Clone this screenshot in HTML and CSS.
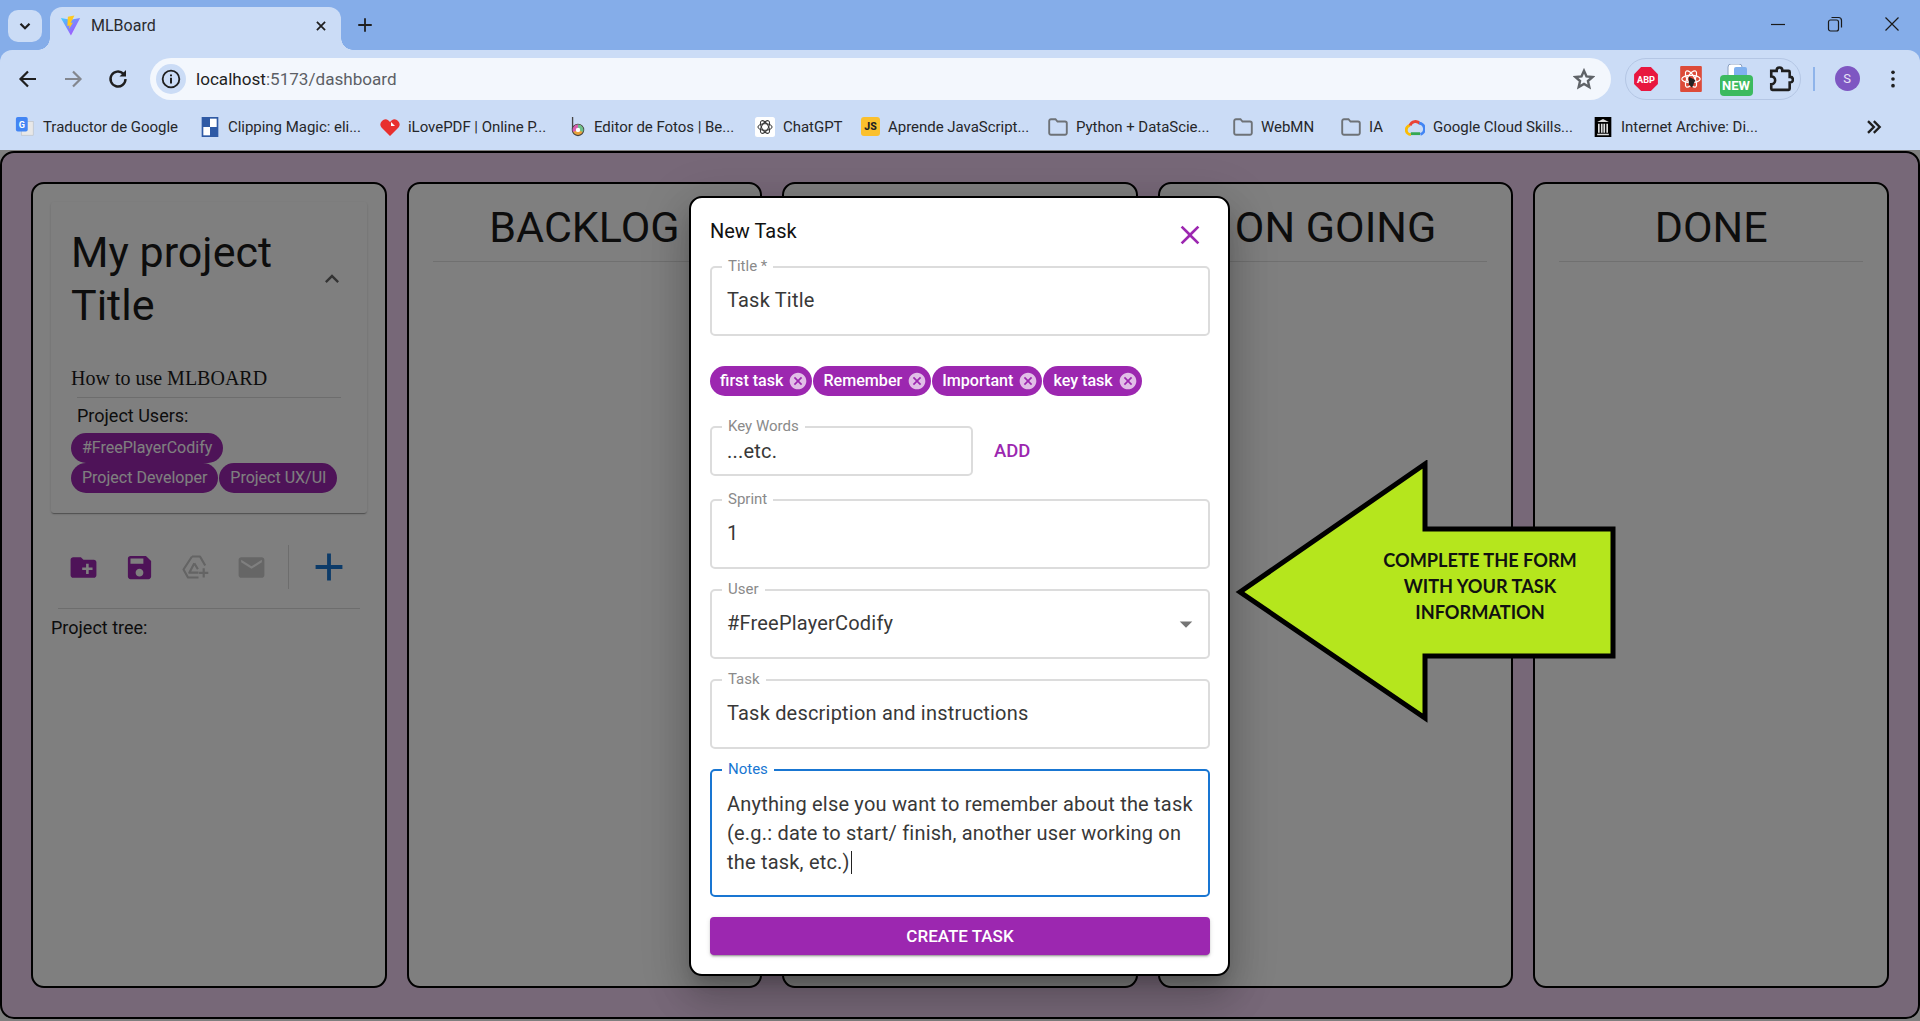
FILE: index.html
```html
<!DOCTYPE html>
<html lang="en">
<head>
<meta charset="utf-8">
<title>MLBoard</title>
<link rel="stylesheet" href="styles.css">
</head>
<body>
<header class="browser">
  <div class="tabstrip">
    <button class="tabsearch"><svg viewBox="0 0 24 24" class="i18"><path d="M6 9l6 6 6-6" fill="none" stroke="#1f1f1f" stroke-width="3"/></svg></button>
    <div class="tab">
      <svg viewBox="0 0 24 24" class="favicon"><defs><linearGradient id="vg" x1="0" y1="0" x2="1" y2="1"><stop offset="0" stop-color="#41d1ff"/><stop offset="1" stop-color="#bd34fe"/></linearGradient></defs><path d="M1 3.5L12 5.5 23 3.5 12.5 23.5z" fill="url(#vg)"/><path d="M16.5 0.5L9 2 8.4 12.5 11 12 10.3 16 14.8 8.6 12.2 9.1z" fill="#ffc91f"/></svg>
      <span class="tabtitle">MLBoard</span>
      <svg viewBox="0 0 24 24" class="tabclose"><path d="M5 5l14 14M19 5L5 19" stroke="#1f1f1f" stroke-width="3" fill="none"/></svg>
    </div>
    <svg viewBox="0 0 24 24" class="newtab"><path d="M12 3v18M3 12h18" stroke="#1f1f1f" stroke-width="2.4" fill="none"/></svg>
    <div class="wincontrols">
      <svg viewBox="0 0 20 20" class="win"><path d="M3 10.5h14" stroke="#1a1a1a" stroke-width="1.2"/></svg>
      <svg viewBox="0 0 20 20" class="win"><rect x="3.5" y="6" width="10" height="11" rx="2" fill="none" stroke="#1a1a1a" stroke-width="1.2"/><path d="M6.5 3.5h7a3 3 0 0 1 3 3v7" fill="none" stroke="#1a1a1a" stroke-width="1.2"/></svg>
      <svg viewBox="0 0 20 20" class="win"><path d="M3.5 3.5l13 13M16.5 3.5l-13 13" stroke="#1a1a1a" stroke-width="1.2"/></svg>
    </div>
  </div>
  <div class="toolbar">
    <button class="navbtn"><svg viewBox="0 0 24 24" class="i24"><path d="M20 12H5M12 4.5L4.5 12l7.5 7.5" fill="none" stroke="#1f1f1f" stroke-width="2.2"/></svg></button>
    <button class="navbtn"><svg viewBox="0 0 24 24" class="i24"><path d="M4 12h15M12 4.5l7.5 7.5-7.5 7.5" fill="none" stroke="#83878f" stroke-width="2.2"/></svg></button>
    <button class="navbtn"><svg viewBox="0 0 24 24" class="i24"><path d="M19.5 12a7.5 7.5 0 1 1-2.2-5.3" fill="none" stroke="#1f1f1f" stroke-width="2.4"/><path d="M20 3v6.5h-6.5z" fill="#1f1f1f"/></svg></button>
    <div class="address">
      <span class="siteinfo"><svg viewBox="0 0 24 24" class="i20"><circle cx="12" cy="12" r="10" fill="none" stroke="#1f1f1f" stroke-width="2.2"/><path d="M12 10.5v7M12 6.5v2.2" stroke="#1f1f1f" stroke-width="2.4"/></svg></span>
      <span class="url">localhost<span class="urlrest">:5173/dashboard</span></span>
      <svg viewBox="0 0 24 24" class="star"><path d="M12 3l2.7 6.1 6.6.7-5 4.4 1.5 6.5L12 17.3l-5.8 3.4 1.5-6.5-5-4.4 6.6-.7z" fill="none" stroke="#5f6368" stroke-width="2.6"/></svg>
    </div>
    <div class="extensions">
      <span class="ext"><svg viewBox="0 0 24 24" class="i26"><path d="M7.5 1h9L23 7.5v9L16.5 23h-9L1 16.5v-9z" fill="#e8173f"/><text x="12" y="15.8" class="abp">ABP</text></svg></span>
      <span class="ext"><svg viewBox="0 0 24 24" class="i26"><rect x="2" y="0" width="20" height="24" rx="1" fill="#dd4b39"/><g fill="none" stroke="#fff" stroke-width="1.1"><ellipse cx="12" cy="12" rx="8.5" ry="3.4"/><ellipse cx="12" cy="12" rx="8.5" ry="3.4" transform="rotate(60 12 12)"/><ellipse cx="12" cy="12" rx="8.5" ry="3.4" transform="rotate(120 12 12)"/></g><path d="M10 10l6 3-3 7-3-3z" fill="#222"/></svg></span>
      <span class="ext extnew"><svg viewBox="0 0 24 14" class="tabsicon"><rect x="3" y="0" width="14" height="14" rx="3" fill="#fff" stroke="#8aa0c0"/><rect x="9" y="3" width="13" height="11" rx="2" fill="#7fb0ee"/></svg><span class="newbadge">NEW</span></span>
      <span class="ext"><svg viewBox="0 0 24 24" class="i26"><path d="M3 4.5h5V4a2.6 2.6 0 0 1 5.2 0v.5H19a1 1 0 0 1 1 1V10h.4a2.6 2.6 0 0 1 0 5.2H20V21a1 1 0 0 1-1 1H4a1 1 0 0 1-1-1v-4.2a3.6 3.6 0 0 0 0-7.2z" fill="none" stroke="#1f1f1f" stroke-width="2.4"/></svg></span>
    </div>
    <span class="tooldivider"></span>
    <span class="avatar">S</span>
    <svg viewBox="0 0 6 24" class="kebab"><circle cx="3" cy="4" r="2.2"/><circle cx="3" cy="12" r="2.2"/><circle cx="3" cy="20" r="2.2"/></svg>
  </div>
  <nav class="bookmarks">
    <a class="bm"><svg viewBox="0 0 20 22" class="bmicon"><rect x="6" y="5" width="13" height="15" fill="#e8e8e8" stroke="#bbb" stroke-width=".6"/><rect x="0" y="0" width="13" height="16" rx="2" fill="#4285f4"/><text x="6.5" y="12" class="gl">G</text></svg>Traductor de Google</a>
    <a class="bm"><svg viewBox="0 0 20 24" class="bmicon"><rect width="20" height="24" fill="#2f5aa5"/><rect x="2" y="2" width="8" height="10" fill="#2f5aa5"/><rect x="10" y="2" width="8" height="10" fill="#fff"/><rect x="2" y="12" width="8" height="10" fill="#fff"/></svg>Clipping Magic: eli...</a>
    <a class="bm"><svg viewBox="0 0 20 20" class="bmicon"><path d="M10 19L1.5 10.5A5 5 0 0 1 8.5 3.5L10 5l1.5-1.5a5 5 0 0 1 7 7z" fill="#e8302e"/><path d="M11 5l4 4h-4z" fill="#fff"/></svg>iLovePDF | Online P...</a>
    <a class="bm"><svg viewBox="0 0 16 24" class="bmicon bmnarrow"><path d="M1.5 0v14" stroke="#444" stroke-width="1.6"/><circle cx="8" cy="15.5" r="6.8" fill="#e9a23b" stroke="#444" stroke-width="1.4"/><path d="M8 9a6.5 6.5 0 0 1 6 9L8 15.5z" fill="#6cc08b"/><path d="M2 18a6.5 6.5 0 0 1 6-9v6.5z" fill="#d65db1"/><circle cx="8" cy="15.5" r="2.6" fill="#fff"/></svg>Editor de Fotos | Be...</a>
    <a class="bm"><svg viewBox="0 0 24 24" class="bmicon"><rect width="24" height="24" rx="3" fill="#fff"/><g fill="none" stroke="#333" stroke-width="1.2"><ellipse cx="12" cy="12" rx="8.5" ry="4"/><ellipse cx="12" cy="12" rx="8.5" ry="4" transform="rotate(60 12 12)"/><ellipse cx="12" cy="12" rx="8.5" ry="4" transform="rotate(120 12 12)"/></g></svg>ChatGPT</a>
    <a class="bm"><span class="jsicon">JS</span>Aprende JavaScript...</a>
    <a class="bm"><svg viewBox="0 0 20 18" class="bmicon"><path d="M1.2 3a1.8 1.8 0 0 1 1.8-1.8h4.5l2 2.3H17a1.8 1.8 0 0 1 1.8 1.8V15a1.8 1.8 0 0 1-1.8 1.8H3A1.8 1.8 0 0 1 1.2 15z" fill="none" stroke="#6e7277" stroke-width="1.9"/></svg>Python + DataScie...</a>
    <a class="bm"><svg viewBox="0 0 20 18" class="bmicon"><path d="M1.2 3a1.8 1.8 0 0 1 1.8-1.8h4.5l2 2.3H17a1.8 1.8 0 0 1 1.8 1.8V15a1.8 1.8 0 0 1-1.8 1.8H3A1.8 1.8 0 0 1 1.2 15z" fill="none" stroke="#6e7277" stroke-width="1.9"/></svg>WebMN</a>
    <a class="bm"><svg viewBox="0 0 20 18" class="bmicon"><path d="M1.2 3a1.8 1.8 0 0 1 1.8-1.8h4.5l2 2.3H17a1.8 1.8 0 0 1 1.8 1.8V15a1.8 1.8 0 0 1-1.8 1.8H3A1.8 1.8 0 0 1 1.2 15z" fill="none" stroke="#6e7277" stroke-width="1.9"/></svg>IA</a>
    <a class="bm"><svg viewBox="0 0 24 20" class="bmicon"><path d="M7 19a5.5 5.5 0 0 1-1-10.9" fill="none" stroke="#fbbc04" stroke-width="3.4"/><path d="M6 8.1A7 7 0 0 1 18 6" fill="none" stroke="#ea4335" stroke-width="3.4"/><path d="M17 5.5a6.8 6.8 0 0 1 1.5 13.3" fill="none" stroke="#4285f4" stroke-width="3.4"/><path d="M7 18h11" stroke="#34a853" stroke-width="3.4"/></svg>Google Cloud Skills...</a>
    <a class="bm"><svg viewBox="0 0 20 24" class="bmicon"><rect width="20" height="24" fill="#000"/><path d="M3 6l7-3.5L17 6zM3 20h14v2H3z" fill="#ddd"/><path d="M5 8v11M8.5 8v11M11.5 8v11M15 8v11" stroke="#ddd" stroke-width="2"/></svg>Internet Archive: Di...</a>
    <a class="bm bmmore"><svg viewBox="0 0 24 24" class="i20"><path d="M6 5l7 7-7 7M13 5l7 7-7 7" fill="none" stroke="#1f1f1f" stroke-width="2.8"/></svg></a>
  </nav>
</header>

<main class="app">
  <div class="board">
    <section class="column project">
      <article class="card">
        <div class="cardhead">
          <h2 class="projecttitle">My project Title</h2>
          <svg viewBox="0 0 24 24" class="chevron"><path d="M12 8l-6 6 1.41 1.41L12 10.83l4.59 4.58L18 14z"/></svg>
        </div>
        <p class="howto">How to use MLBOARD</p>
        <hr class="cardrule">
        <p class="userslabel">Project Users:</p>
        <div class="userchips">
          <span class="chip">#FreePlayerCodify</span>
          <span class="chip">Project Developer</span>
          <span class="chip">Project UX/UI</span>
        </div>
      </article>
      <div class="actions">
        <span class="action"><svg viewBox="0 0 24 24" class="i31 purple"><path d="M20 6h-8l-2-2H4c-1.11 0-1.99.89-1.99 2L2 18c0 1.11.89 2 2 2h16c1.11 0 2-.89 2-2V8c0-1.11-.89-2-2-2zm-1 8h-3v3h-2v-3h-3v-2h3V9h2v3h3v2z"/></svg></span>
        <span class="action"><svg viewBox="0 0 24 24" class="i31 purple"><path d="M17 3H5c-1.11 0-2 .9-2 2v14c0 1.1.89 2 2 2h14c1.1 0 2-.9 2-2V7l-4-4zm-5 16c-1.66 0-3-1.34-3-3s1.34-3 3-3 3 1.34 3 3-1.34 3-3 3zm3-10H5V5h10v4z"/></svg></span>
        <span class="action"><svg viewBox="0 0 27 24" class="drive"><path d="M10 1.5h8l5.2 9M10 1.5L1.5 14.5 6 22.5h10.5M12.3 8.3L7.3 17.7H16.5M12.3 8.3l3.6 5.9" fill="none" stroke="#c8c8c8" stroke-width="2.2" stroke-linejoin="round"/><path d="M21.7 13.2v9.2M17.1 17.8h9.2" stroke="#c8c8c8" stroke-width="2.2"/></svg></span>
        <span class="action"><svg viewBox="0 0 24 24" class="i31 mail"><path d="M20 4H4c-1.1 0-1.99.9-1.99 2L2 18c0 1.1.9 2 2 2h16c1.1 0 2-.9 2-2V6c0-1.1-.9-2-2-2zm0 4l-8 5-8-5V6l8 5 8-5v2z"/></svg></span>
        <span class="actiondivider"></span>
        <span class="action"><svg viewBox="0 0 24 24" class="i44 blue"><path d="M19 13h-6v6h-2v-6H5v-2h6V5h2v6h6v2z"/></svg></span>
      </div>
      <hr class="treerule">
      <p class="treelabel">Project tree:</p>
    </section>
    <section class="column"><h2 class="coltitle">BACKLOG</h2><hr class="colrule"></section>
    <section class="column"><h2 class="coltitle">TO DO</h2><hr class="colrule"></section>
    <section class="column"><h2 class="coltitle">ON GOING</h2><hr class="colrule"></section>
    <section class="column"><h2 class="coltitle">DONE</h2><hr class="colrule"></section>
  </div>

  <div class="backdrop"></div>

  <div class="modal">
    <div class="modalhead">
      <h3 class="modaltitle">New Task</h3>
      <svg viewBox="0 0 24 24" class="modalclose"><path d="M19 6.41L17.59 5 12 10.59 6.41 5 5 6.41 10.59 12 5 17.59 6.41 19 12 13.41 17.59 19 19 17.59 13.41 12z"/></svg>
    </div>
    <div class="field"><span class="label">Title *</span><span class="value">Task Title</span></div>
    <div class="taskchips">
      <span class="taskchip">first task<svg viewBox="0 0 24 24" class="chipx"><path d="M12 2C6.47 2 2 6.47 2 12s4.47 10 10 10 10-4.47 10-10S17.53 2 12 2zm5 13.59L15.59 17 12 13.41 8.41 17 7 15.59 10.59 12 7 8.41 8.41 7 12 10.59 15.59 7 17 8.41 13.41 12 17 15.59z"/></svg></span>
      <span class="taskchip">Remember<svg viewBox="0 0 24 24" class="chipx"><path d="M12 2C6.47 2 2 6.47 2 12s4.47 10 10 10 10-4.47 10-10S17.53 2 12 2zm5 13.59L15.59 17 12 13.41 8.41 17 7 15.59 10.59 12 7 8.41 8.41 7 12 10.59 15.59 7 17 8.41 13.41 12 17 15.59z"/></svg></span>
      <span class="taskchip">Important<svg viewBox="0 0 24 24" class="chipx"><path d="M12 2C6.47 2 2 6.47 2 12s4.47 10 10 10 10-4.47 10-10S17.53 2 12 2zm5 13.59L15.59 17 12 13.41 8.41 17 7 15.59 10.59 12 7 8.41 8.41 7 12 10.59 15.59 7 17 8.41 13.41 12 17 15.59z"/></svg></span>
      <span class="taskchip">key task<svg viewBox="0 0 24 24" class="chipx"><path d="M12 2C6.47 2 2 6.47 2 12s4.47 10 10 10 10-4.47 10-10S17.53 2 12 2zm5 13.59L15.59 17 12 13.41 8.41 17 7 15.59 10.59 12 7 8.41 8.41 7 12 10.59 15.59 7 17 8.41 13.41 12 17 15.59z"/></svg></span>
    </div>
    <div class="keyrow">
      <div class="field keyfield"><span class="label">Key Words</span><span class="value">...etc.</span></div>
      <span class="addbtn">ADD</span>
    </div>
    <div class="field sprint"><span class="label">Sprint</span><span class="value">1</span></div>
    <div class="field gap20 selectfield"><span class="label">User</span><span class="value">#FreePlayerCodify</span><svg viewBox="0 0 24 24" class="dropdown"><path d="M7 10l5 5 5-5z"/></svg></div>
    <div class="field gap20"><span class="label">Task</span><span class="value">Task description and instructions</span></div>
    <div class="field gap20 notes"><span class="label notelabel">Notes</span><span class="value notesvalue">Anything else you want to remember about the task<br>(e.g.: date to start/ finish, another user working on<br>the task, etc.)<span class="caret"></span></span></div>
    <button class="createbtn">CREATE TASK</button>
  </div>

  <aside class="callout">
    <svg viewBox="0 0 384 264" class="calloutshape"><path d="M5 132L190 4V69H378V196H190V258z" fill="#b5e61d" stroke="#000" stroke-width="5" stroke-linejoin="miter"/></svg>
    <p class="callouttext">COMPLETE THE FORM<br>WITH YOUR TASK<br>INFORMATION</p>
  </aside>
</main>
</body>
</html>
```

FILE: styles.css
```css
* { box-sizing: border-box; }
html, body { margin: 0; height: 1021px; overflow: hidden; }
body { display: flex; flex-direction: column; background: #fff; font-family: Roboto, "Liberation Sans", sans-serif; color: #1a1a1a; }
h2, h3, p { margin: 0; font-weight: 400; }
button { border: 0; padding: 0; background: none; font-family: inherit; }
hr { border: 0; margin: 0; height: 1px; background: rgba(0,0,0,.12); }

.i18 { width: 18px; height: 18px; }
.i20 { width: 20px; height: 20px; }
.i24 { width: 24px; height: 24px; }
.i26 { width: 26px; height: 26px; }
.i31 { width: 31px; height: 31px; }
.i44 { width: 46px; height: 46px; }
.drive { width: 27px; height: 24px; }
.purple { fill: #9c27b0; }
.blue { fill: #1976d2; }
.mail { fill: #cdcdcd; }

/* Browser frame */
.browser { flex: none; height: 150px; display: flex; flex-direction: column; background: #85ade9; font-family: Roboto, sans-serif; }
.tabstrip { height: 50px; display: flex; align-items: flex-end; padding-left: 8px; flex: none; }
.tabsearch { width: 34px; height: 32px; margin-bottom: 8px; border-radius: 10px; background: #cbdcf6; display: flex; align-items: center; justify-content: center; }
.tab { position: relative; width: 291px; height: 43px; margin-left: 8px; background: #cbdcf6; border-radius: 12px 12px 0 0; display: flex; align-items: center; padding: 0 13px 6px 10px; }
.tab::before, .tab::after { content: ""; position: absolute; bottom: 0; width: 12px; height: 12px; }
.tab::before { left: -12px; background: radial-gradient(circle at 0 0, transparent 11.5px, #cbdcf6 12px); }
.tab::after { right: -12px; background: radial-gradient(circle at 100% 0, transparent 11.5px, #cbdcf6 12px); }
.favicon { width: 21px; height: 21px; flex: none; }
.tabtitle { margin-left: 10px; flex: 1; font-size: 16px; color: #2a2b2e; }
.tabclose { width: 14px; height: 14px; }
.newtab { width: 18px; height: 18px; margin: 0 0 16px 15px; }
.wincontrols { margin-left: auto; display: flex; align-items: center; margin-bottom: 16px; padding-right: 18px; gap: 37px; }
.win { width: 20px; height: 20px; }

.toolbar { height: 58px; flex: none; display: flex; align-items: flex-start; padding: 8px 0 0 5px; background: #cbdcf6; border-radius: 12px 12px 0 0; }
.navbtn { width: 45px; height: 42px; display: flex; align-items: center; justify-content: center; }
.address { width: 1461px; margin-left: 10px; height: 42px; border-radius: 21px; background: #f3f7fd; display: flex; align-items: center; padding: 0 16px 0 6px; }
.siteinfo { width: 30px; height: 30px; border-radius: 50%; background: #cbdcf6; display: flex; align-items: center; justify-content: center; }
.url { margin-left: 10px; font-size: 17.1px; color: #1f1f1f; flex: 1; }
.urlrest { color: #5c5f66; }
.star { width: 22px; height: 22px; }
.extensions { width: 176px; height: 42px; margin-left: 14px; border: 1px solid #b4c6e4; border-radius: 21px; display: flex; align-items: center; }
.ext { width: 45px; flex: none; display: flex; align-items: center; justify-content: center; position: relative; }
.ext:first-child { margin-left: -2.5px; }
.abp { font: 700 8.5px Roboto, sans-serif; fill: #fff; text-anchor: middle; }
.extnew { height: 30px; display: block; }
.tabsicon { position: absolute; left: 10px; top: 0; width: 26px; height: 14px; }
.newbadge { position: absolute; left: 6px; top: 11px; width: 33px; height: 21px; border-radius: 4px; background: #3cba5f; color: #fff; font: 700 13px/21px Roboto, sans-serif; text-align: center; }
.tooldivider { width: 1.5px; height: 24px; margin: 9px 0 0 12px; background: #8fb4ea; }
.avatar { width: 25px; height: 25px; margin: 8px 0 0 20px; border-radius: 50%; background: #7e57c2; color: #e9e2f5; font: 400 13px/25px Roboto, sans-serif; text-align: center; }
.kebab { width: 6px; height: 20px; margin: 11px 0 0 30px; fill: #1f1f1f; }

.bookmarks { height: 42px; flex: none; background: #cbdcf6; display: grid; grid-template-columns: 185px 180px 190px 185px 106px 187px 185px 108px 64px 188px 270px 30px; padding: 0 0 5px 15px; align-items: center; }
.bm { display: flex; align-items: center; gap: 8px; font-size: 15px; letter-spacing: -.03px; color: #26272a; white-space: nowrap; }
.bmicon { width: 20px; height: 20px; flex: none; }
.bmnarrow { width: 16px; height: 20px; }
.gl { font: 700 10px Roboto, sans-serif; fill: #fff; text-anchor: middle; }
.jsicon { width: 19px; height: 19px; border-radius: 3px; background: #fbc02d; color: #222; font: 800 10.5px/20px Roboto, sans-serif; text-align: center; flex: none; letter-spacing: 0; }
.bmmore { justify-content: flex-start; }

/* App */
.app { flex: 1; position: relative; padding-top: 1px; background: #fff; min-height: 0; }
.board { height: 868px; border: 2px solid #000; border-radius: 14px; background: #eed0f0; display: grid; grid-template-columns: repeat(5, 1fr); gap: 20px; padding: 29px; }
.column { background: #fff; border: 2px solid #000; border-radius: 13px; padding: 0 24px; display: flex; flex-direction: column; }
.coltitle { text-align: center; font-size: 43px; line-height: 50px; padding-top: 18px; }
.colrule { margin-top: 9px; }

.project { padding: 18px 18px 0; }
.card { background: #fff; height: 311px; box-shadow: 0 2px 1px -1px rgba(0,0,0,.2), 0 1px 1px 0 rgba(0,0,0,.14), 0 1px 3px 0 rgba(0,0,0,.12); padding: 24px 0 0 20px; border-radius: 3px; }
.cardhead { display: flex; align-items: center; height: 106px; }
.projecttitle { font-size: 43px; line-height: 53px; width: 241px; flex: none; }
.chevron { width: 28px; height: 28px; margin-left: 6px; fill: rgba(0,0,0,.6); }
.howto { margin-top: 32px; font-family: "Liberation Serif", serif; font-size: 20px; line-height: 28px; }
.cardrule { margin: 5px 26px 0 6px; background: rgba(0,0,0,.14); }
.userslabel { margin: 7px 0 0 6px; font-size: 18px; line-height: 22px; }
.userchips { display: flex; flex-wrap: wrap; margin: 6px 0 0 0; }
.chip { height: 30px; padding: 0 11px; border-radius: 15px; background: #9c27b0; color: #fff; font-size: 16px; line-height: 30px; margin-right: 1px; }

.actions { display: flex; align-items: center; height: 44px; margin: 32px 0 0 4px; }
.action { width: 56px; display: flex; align-items: center; justify-content: center; }
.actiondivider { width: 1px; height: 44px; margin: 0 8px 0 9px; background: rgba(0,0,0,.14); }
.action:last-child { width: 64px; }
.treerule { margin: 19px 7px 0; background: rgba(0,0,0,.14); }
.treelabel { margin: 8px 0 0; font-size: 18px; line-height: 22px; }

.backdrop { position: absolute; inset: 0; background: rgba(0,0,0,.5); }

.modal { position: absolute; left: 689px; top: 46px; width: 541px; height: 780px; background: #fff; border: 2px solid #000; border-radius: 13px; padding: 0 18px 0 19px; display: flex; flex-direction: column; box-shadow: 0 11px 15px -7px rgba(0,0,0,.2), 0 24px 38px 3px rgba(0,0,0,.14), 0 9px 46px 8px rgba(0,0,0,.12); }
.modalhead { height: 68px; flex: none; display: flex; justify-content: space-between; }
.modaltitle { font-size: 20px; line-height: 24px; margin-top: 21px; color: #111; }
.modalclose { width: 32px; height: 32px; fill: #9c27b0; margin: 21px 4px 0 0; }

.field { position: relative; flex: none; height: 70px; border: 2px solid #dcdcdc; border-radius: 5px; padding: 0 16px 0 15px; display: flex; align-items: center; }
.label { position: absolute; left: 10px; top: -10px; padding: 0 6px; background: #fff; font-size: 15px; line-height: 16px; color: #8a8a8a; }
.value { font-size: 20px; line-height: 29px; letter-spacing: .2px; color: #383838; margin-top: -2px; white-space: nowrap; }
.taskchips { display: flex; gap: 1px; margin-top: 30px; flex: none; }
.taskchip { height: 30px; padding: 0 4px 0 10px; border-radius: 15px; background: #9c27b0; color: #fff; font-size: 16.1px; font-weight: 500; line-height: 30px; display: flex; align-items: center; gap: 5px; }
.chipx { width: 20px; height: 20px; fill: #e1bee7; }
.keyrow { display: flex; align-items: center; margin-top: 30px; flex: none; }
.keyfield { width: 263px; height: 50px; }
.keyfield .value { margin-top: 0; }
.addbtn { margin-left: 21px; color: #9c27b0; font-size: 18.5px; font-weight: 500; }
.sprint { margin-top: 23px; }
.gap20 { margin-top: 20px; }
.selectfield { justify-content: space-between; }
.dropdown { width: 30px; height: 30px; fill: #757575; margin-right: -9px; }
.notes { height: 128px; border-color: #1976d2; align-items: flex-start; padding-top: 19px; }
.notelabel { color: #1976d2; }
.notesvalue { margin-top: 0; }
.caret { display: inline-block; width: 1px; height: 23px; background: #222; vertical-align: -5px; margin-left: 1px; }
.createbtn { margin-top: 20px; height: 38px; flex: none; border-radius: 4px; background: #9c27b0; color: #fff; font-size: 17px; font-weight: 500; box-shadow: 0 3px 1px -2px rgba(0,0,0,.2), 0 2px 2px 0 rgba(0,0,0,.14), 0 1px 5px 0 rgba(0,0,0,.12); }

.callout { position: absolute; left: 1235px; top: 310px; width: 384px; height: 264px; }
.calloutshape { position: absolute; inset: 0; width: 100%; height: 100%; }
.callouttext { position: absolute; left: 138px; top: 87px; width: 214px; text-align: center; font-family: Lato, sans-serif; font-weight: 700; font-size: 18.2px; line-height: 26px; color: #111; }
```
